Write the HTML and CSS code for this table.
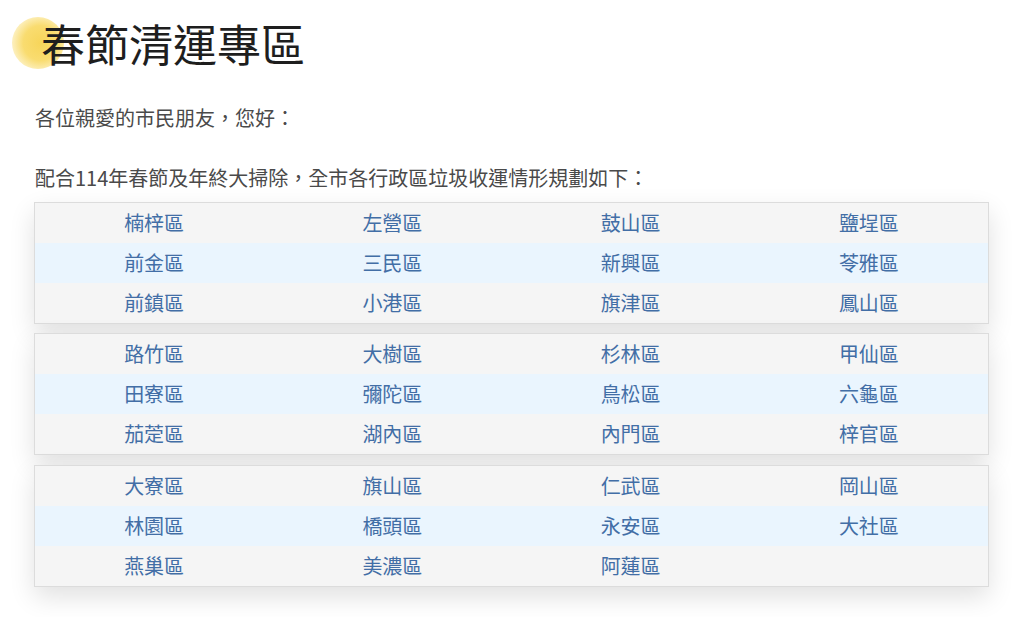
FILE: index.html
```html
<!DOCTYPE html>
<html lang="zh-Hant">
<head>
<meta charset="utf-8">
<title>春節清運專區</title>
<link rel="stylesheet" href="styles.css">
</head>
<body>
<div class="page">
  <h1 class="title"><span class="sun"></span><span class="title-text">春節清運專區</span></h1>
  <p class="intro">各位親愛的市民朋友，您好：</p>
  <p class="lead">配合114年春節及年終大掃除，全市各行政區垃圾收運情形規劃如下：</p>
  <div class="group first">
    <div class="row"><a class="cell">楠梓區</a><a class="cell">左營區</a><a class="cell">鼓山區</a><a class="cell">鹽埕區</a></div>
    <div class="row alt"><a class="cell">前金區</a><a class="cell">三民區</a><a class="cell">新興區</a><a class="cell">苓雅區</a></div>
    <div class="row"><a class="cell">前鎮區</a><a class="cell">小港區</a><a class="cell">旗津區</a><a class="cell">鳳山區</a></div>
  </div>
  <div class="group">
    <div class="row"><a class="cell">路竹區</a><a class="cell">大樹區</a><a class="cell">杉林區</a><a class="cell">甲仙區</a></div>
    <div class="row alt"><a class="cell">田寮區</a><a class="cell">彌陀區</a><a class="cell">鳥松區</a><a class="cell">六龜區</a></div>
    <div class="row"><a class="cell">茄萣區</a><a class="cell">湖內區</a><a class="cell">內門區</a><a class="cell">梓官區</a></div>
  </div>
  <div class="group">
    <div class="row"><a class="cell">大寮區</a><a class="cell">旗山區</a><a class="cell">仁武區</a><a class="cell">岡山區</a></div>
    <div class="row alt"><a class="cell">林園區</a><a class="cell">橋頭區</a><a class="cell">永安區</a><a class="cell">大社區</a></div>
    <div class="row"><a class="cell">燕巢區</a><a class="cell">美濃區</a><a class="cell">阿蓮區</a><a class="cell"></a></div>
  </div>
</div>
</body>
</html>
```

FILE: styles.css
```css
html, body {
  margin: 0;
  padding: 0;
  background: #ffffff;
}
body {
  font-family: "Noto Sans CJK TC", "Noto Sans", "Liberation Sans", sans-serif;
  color: #4a4a4a;
}
.page {
  padding: 14px 35px 40px 34px;
  width: 955px;
}
.title {
  position: relative;
  margin: 0 0 31px 0;
  height: 58px;
  line-height: 58px;
  font-size: 44px;
  font-weight: 400;
  color: #1e1e1e;
  padding-left: 7px;
}
.sun {
  position: absolute;
  left: -22px;
  top: 3px;
  width: 52px;
  height: 52px;
  border-radius: 50%;
  background: radial-gradient(circle at 55% 50%, #f7d55a 0%, #f9dc70 45%, rgba(251,230,150,0.75) 68%, rgba(255,244,205,0) 100%);
}
.title-text {
  position: relative;
}
.intro, .lead {
  margin: 0;
  font-size: 20px;
  line-height: 30px;
  color: #4a4a4a;
  padding-left: 1px;
}
.intro {
  margin-bottom: 30px;
}
.lead {
  margin-bottom: 9px;
}
.group {
  border: 1px solid #dcdcdc;
  background: #f5f5f5;
  box-shadow: 0 10px 24px rgba(0, 0, 0, 0.12);
  margin-bottom: 10px;
}
.group.first {
  margin-bottom: 9px;
}
.row {
  display: grid;
  grid-template-columns: repeat(4, 1fr);
  height: 40px;
  background: #f5f5f5;
}
.row.alt {
  background: #eaf5fe;
}
.cell {
  text-align: center;
  font-size: 20px;
  line-height: 40px;
  color: #426ea6;
  text-decoration: none;
}
```
